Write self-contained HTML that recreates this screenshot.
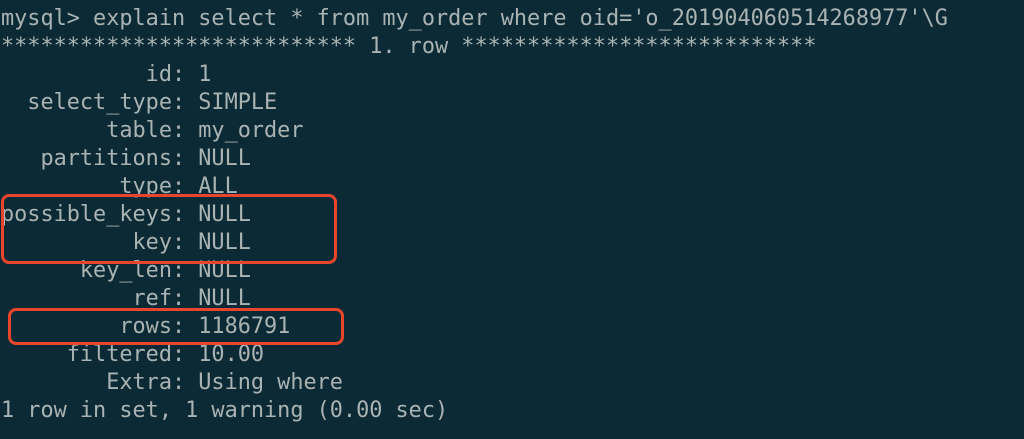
<!DOCTYPE html>
<html><head><meta charset="utf-8"><style>
html,body{margin:0;padding:0;}
body{width:1024px;height:439px;background:#0c2a35;overflow:hidden;position:relative;}
pre{margin:0;position:absolute;left:1px;top:5px;font-family:"DejaVu Sans Mono","Liberation Mono",monospace;font-size:21.85px;line-height:28px;color:#aab3b3;}
.b{position:absolute;border:3px solid #e8452c;border-radius:8px;box-sizing:border-box;}
</style></head><body>
<pre>mysql&gt; explain select * from my_order where oid='o_201904060514268977'\G
*************************** 1. row ***************************
           id: 1
  select_type: SIMPLE
        table: my_order
   partitions: NULL
         type: ALL
possible_keys: NULL
          key: NULL
      key_len: NULL
          ref: NULL
         rows: 1186791
     filtered: 10.00
        Extra: Using where
1 row in set, 1 warning (0.00 sec)</pre>
<div class="b" style="left:1px;top:194px;width:336px;height:70px;"></div>
<div class="b" style="left:8px;top:308px;width:336px;height:37px;"></div>
</body></html>
